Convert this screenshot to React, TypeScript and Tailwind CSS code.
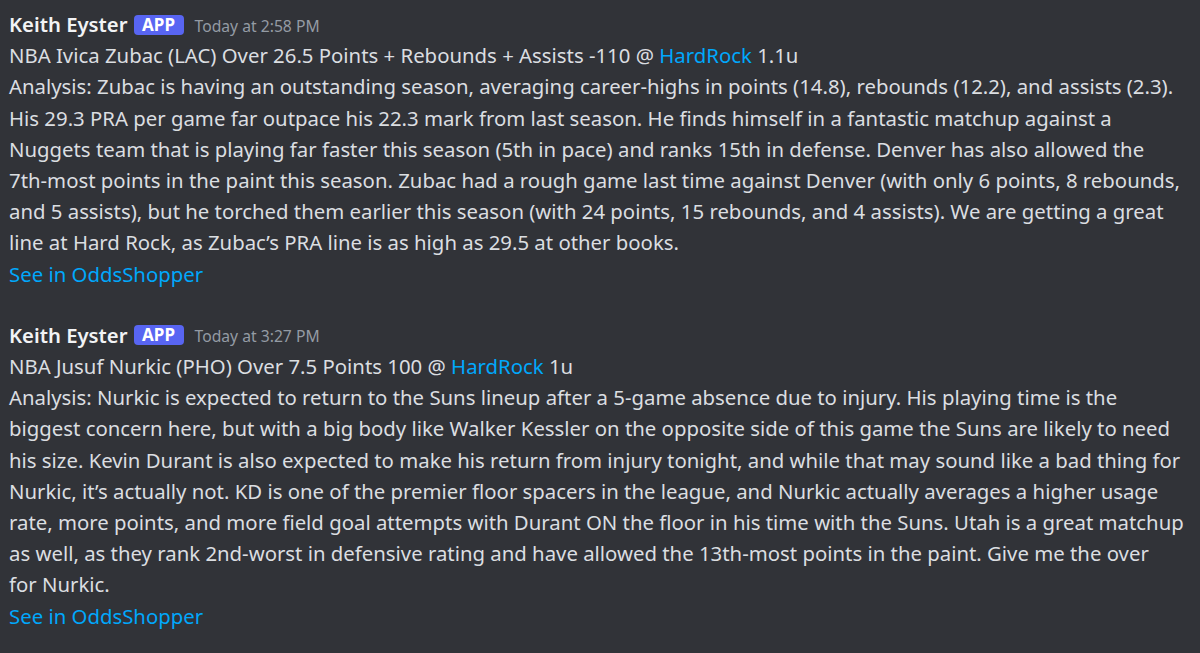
import React from "react";

// ── Message data: each body line kept as rendered in the chat ───────────────
type Msg = {
    time: string;
    pick: React.ReactNode;
    lines: string[];
};

const messages: Msg[] = [
    {
        time: "Today at 2:58 PM",
        pick: (
            <>
                NBA Ivica Zubac (LAC) Over 26.5 Points + Rebounds + Assists -110 @{" "}
                <span className="text-[#00a8fc]">HardRock</span> 1.1u
            </>
        ),
        lines: [
            "Analysis: Zubac is having an outstanding season, averaging career-highs in points (14.8), rebounds (12.2), and assists (2.3).",
            "His 29.3 PRA per game far outpace his 22.3 mark from last season. He finds himself in a fantastic matchup against a",
            "Nuggets team that is playing far faster this season (5th in pace) and ranks 15th in defense. Denver has also allowed the",
            "7th-most points in the paint this season. Zubac had a rough game last time against Denver (with only 6 points, 8 rebounds,",
            "and 5 assists), but he torched them earlier this season (with 24 points, 15 rebounds, and 4 assists). We are getting a great",
            "line at Hard Rock, as Zubac\u2019s PRA line is as high as 29.5 at other books.",
        ],
    },
    {
        time: "Today at 3:27 PM",
        pick: (
            <>
                NBA Jusuf Nurkic (PHO) Over 7.5 Points 100 @{" "}
                <span className="text-[#00a8fc]">HardRock</span> 1u
            </>
        ),
        lines: [
            "Analysis: Nurkic is expected to return to the Suns lineup after a 5-game absence due to injury. His playing time is the",
            "biggest concern here, but with a big body like Walker Kessler on the opposite side of this game the Suns are likely to need",
            "his size. Kevin Durant is also expected to make his return from injury tonight, and while that may sound like a bad thing for",
            "Nurkic, it\u2019s actually not. KD is one of the premier floor spacers in the league, and Nurkic actually averages a higher usage",
            "rate, more points, and more field goal attempts with Durant ON the floor in his time with the Suns. Utah is a great matchup",
            "as well, as they rank 2nd-worst in defensive rating and have allowed the 13th-most points in the paint. Give me the over",
            "for Nurkic.",
        ],
    },
];

function Message({ msg }: { msg: Msg }) {
    return (
        <div className="flex flex-col">
            {/* Header: name, bot badge, timestamp */}
            <div className="flex items-center h-[31.2px]">
                <span className="text-[20.3px] font-semibold text-[#f2f3f5]">Keith Eyster</span>
                <span className="ml-[6px] h-[20px] w-[50px] justify-center rounded-[4px] bg-[#5865f2] text-white text-[17px] font-bold leading-[20px] flex items-center">
                    APP
                </span>
                <span className="ml-[11px] mt-[3px] text-[15.7px] text-[#949ba4]">{msg.time}</span>
            </div>
            <div className="whitespace-nowrap">{msg.pick}</div>
            {msg.lines.map((l, i) => (
                <div key={i} className="whitespace-nowrap">
                    {l}
                </div>
            ))}
            <div className="text-[#00a8fc]">See in OddsShopper</div>
        </div>
    );
}

export default function App() {
    return (
        <div
            className="w-[1200px] h-[653px] overflow-hidden bg-[#313338] text-[#dbdee1] text-[20.35px] leading-[31.2px] pl-[9px] pt-[9px] flex flex-col gap-[30px]"
            style={{ fontFamily: "'Noto Sans', 'Open Sans', sans-serif" }}
        >
            {messages.map((m, i) => (
                <Message key={i} msg={m} />
            ))}
        </div>
    );
}
